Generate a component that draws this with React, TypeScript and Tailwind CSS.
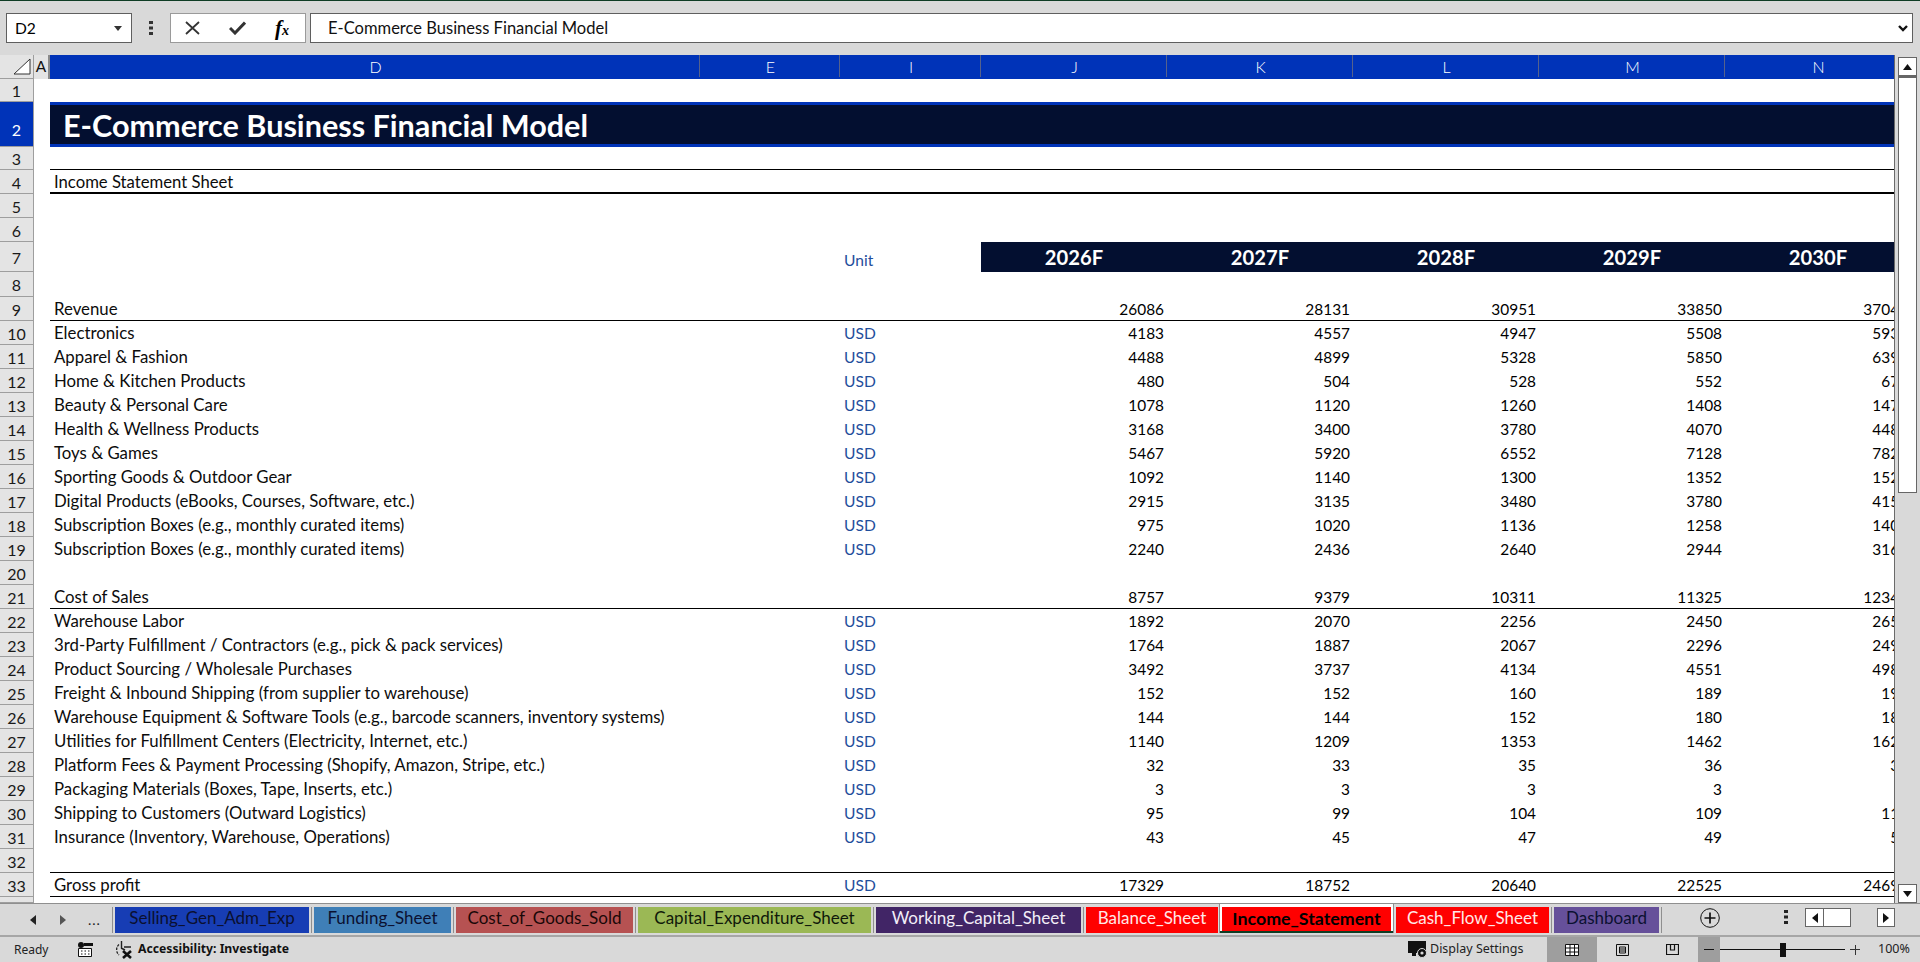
import React from "react";

type DataRow = { n: number; label?: string; unit?: boolean; values?: (number | string)[]; border?: string };

const HEAD_GRID = "grid grid-cols-[16px_650px_140px_141px_186px_186px_186px_186px_186px]";
const BODY_GRID = "grid grid-cols-[650px_140px_141px_186px_186px_186px_186px_186px]";

const rows: DataRow[] = [
  { n: 9, label: "Revenue", values: [26086, 28131, 30951, 33850, 37040], border: "border-b border-black" },
  { n: 10, label: "Electronics", unit: true, values: [4183, 4557, 4947, 5508, 5930] },
  { n: 11, label: "Apparel & Fashion", unit: true, values: [4488, 4899, 5328, 5850, 6390] },
  { n: 12, label: "Home & Kitchen Products", unit: true, values: [480, 504, 528, 552, 670] },
  { n: 13, label: "Beauty & Personal Care", unit: true, values: [1078, 1120, 1260, 1408, 1470] },
  { n: 14, label: "Health & Wellness Products", unit: true, values: [3168, 3400, 3780, 4070, 4480] },
  { n: 15, label: "Toys & Games", unit: true, values: [5467, 5920, 6552, 7128, 7820] },
  { n: 16, label: "Sporting Goods & Outdoor Gear", unit: true, values: [1092, 1140, 1300, 1352, 1520] },
  { n: 17, label: "Digital Products (eBooks, Courses, Software, etc.)", unit: true, values: [2915, 3135, 3480, 3780, 4150] },
  { n: 18, label: "Subscription Boxes (e.g., monthly curated items)", unit: true, values: [975, 1020, 1136, 1258, 1400] },
  { n: 19, label: "Subscription Boxes (e.g., monthly curated items)", unit: true, values: [2240, 2436, 2640, 2944, 3160] },
  { n: 20 },
  { n: 21, label: "Cost of Sales", values: [8757, 9379, 10311, 11325, 12340], border: "border-b border-black" },
  { n: 22, label: "Warehouse Labor", unit: true, values: [1892, 2070, 2256, 2450, 2650] },
  { n: 23, label: "3rd-Party Fulfillment / Contractors (e.g., pick & pack services)", unit: true, values: [1764, 1887, 2067, 2296, 2490] },
  { n: 24, label: "Product Sourcing / Wholesale Purchases", unit: true, values: [3492, 3737, 4134, 4551, 4980] },
  { n: 25, label: "Freight & Inbound Shipping (from supplier to warehouse)", unit: true, values: [152, 152, 160, 189, 190] },
  { n: 26, label: "Warehouse Equipment & Software Tools (e.g., barcode scanners, inventory systems)", unit: true, values: [144, 144, 152, 180, 180] },
  { n: 27, label: "Utilities for Fulfillment Centers (Electricity, Internet, etc.)", unit: true, values: [1140, 1209, 1353, 1462, 1620] },
  { n: 28, label: "Platform Fees & Payment Processing (Shopify, Amazon, Stripe, etc.)", unit: true, values: [32, 33, 35, 36, 38] },
  { n: 29, label: "Packaging Materials (Boxes, Tape, Inserts, etc.)", unit: true, values: [3, 3, 3, 3, 4] },
  { n: 30, label: "Shipping to Customers (Outward Logistics)", unit: true, values: [95, 99, 104, 109, 114] },
  { n: 31, label: "Insurance (Inventory, Warehouse, Operations)", unit: true, values: [43, 45, 47, 49, 52] },
  { n: 32, border: "border-b border-black" },
  { n: 33, label: "Gross profit", unit: true, values: [17329, 18752, 20640, 22525, 24690], border: "border-b border-black" },
];

function RowHead({ children, active, className }: { children?: React.ReactNode; active?: boolean; className?: string }) {
  return (
    <div
      className={`w-[34px] shrink-0 flex justify-center border-r border-b border-[#9e9e9e] text-[16px] leading-none ${
        active ? "bg-[#0033b8] text-white" : "bg-[#e4e4e4] text-[#1a1a1a]"
      } ${className ?? "items-center pt-[2px]"}`}
    >
      {children}
    </div>
  );
}

function DataLine({ row }: { row: DataRow }) {
  return (
    <div className="flex h-[24px] shrink-0">
      <RowHead>{row.n}</RowHead>
      <div className="w-[16px] shrink-0" />
      <div className={`${BODY_GRID} ${row.border ?? ""}`}>
        <div className="pl-1 whitespace-nowrap leading-[24px] text-[16.8px] text-[#0c0c0c]">{row.label}</div>
        <div />
        <div className="pl-1 leading-[24px] text-[15.6px] text-[#1f4e9c]">{row.unit ? "USD" : ""}</div>
        {(row.values ?? ["", "", "", "", ""]).map((v, i) => (
          <div key={i} className="pr-[3px] text-right leading-[24px] text-[15.4px] text-black">
            {v}
          </div>
        ))}
      </div>
    </div>
  );
}

function ColHead({ label }: { label: string }) {
  return (
    <div className="h-[22px] flex items-center justify-center border-r border-[#56628c] pt-[2px] pl-[2px] text-white text-[16px] font-light">{label}</div>
  );
}

function Tab({ label, width, bg, color, active }: { label: string; width: string; bg: string; color: string; active?: boolean }) {
  return (
    <div className={`${width} ${bg} ${color} h-[26px] pb-[4px] flex items-center justify-center whitespace-nowrap ${active ? "font-bold text-[17.8px]" : "text-[17px]"}`}>
      {label}
    </div>
  );
}

function Sep() {
  return <div className="w-[1px] h-[26px] mx-[2px] bg-[#8f8f8f]" />;
}

export default function App() {
  return (
    <div className="w-[1920px] h-[962px] overflow-hidden flex flex-col bg-[#d9d9d9] font-['Lato',sans-serif] border-t border-[#0f3d24]">
      {/* Formula bar */}
      <div className="h-[54px] shrink-0 flex items-start pt-[12px] pl-[6px]">
        <div className="w-[126px] h-[30px] bg-white border border-[#5f5f5f] flex items-center justify-between pl-[8px] pr-[9px] text-[15.6px] text-black">
          <span className="pt-[1px]">D2</span>
          <svg width="8" height="5" viewBox="0 0 8 5"><path d="M0 0h8L4 5z" fill="#333" /></svg>
        </div>
        <div className="w-[38px] h-[30px] flex items-center justify-center">
          <svg width="4" height="14" viewBox="0 0 4 14" fill="#333"><rect x="0" y="0" width="4" height="3" /><rect x="0" y="5.5" width="4" height="3" /><rect x="0" y="11" width="4" height="3" /></svg>
        </div>
        <div className="w-[136px] h-[30px] bg-white border border-[#9a9a9a] flex items-center text-[#333]">
          <svg className="ml-[14px]" width="15" height="14" viewBox="0 0 15 14"><path d="M1 1l13 12M14 1L1 13" stroke="#333" strokeWidth="1.8" fill="none" /></svg>
          <svg className="ml-[29px]" width="17" height="14" viewBox="0 0 17 14"><path d="M1 7l5 5L16 1.5" stroke="#333" strokeWidth="3" fill="none" /></svg>
          <span className="ml-[29px] font-['Liberation_Serif',serif] italic font-bold text-[21px] leading-none text-black">f<span className="text-[14px]">x</span></span>
        </div>
        <div className="ml-[4px] w-[1603px] h-[30px] bg-white border border-[#5f5f5f] flex items-center justify-between pl-[17px] pr-[4px] text-[16.55px] text-[#111]">
          <span className="pt-[1px]">E-Commerce Business Financial Model</span>
          <svg width="10" height="7" viewBox="0 0 10 7"><path d="M1 1l4 4 4-4" stroke="#111" strokeWidth="2.4" fill="none" /></svg>
        </div>
      </div>

      {/* Sheet + vertical scrollbar */}
      <div className="h-[848px] shrink-0 flex">
        <div className="w-[1895px] h-full overflow-hidden border-r border-[#6a6a6a] bg-white flex flex-col">
          {/* Column headers */}
          <div className="flex h-[24px] shrink-0 bg-[#d9d9d9]">
            <div className="w-[34px] shrink-0 bg-[#e4e4e4] border-r border-b border-[#9e9e9e] flex items-end justify-end pr-[2px] pb-[3px]">
              <svg width="18" height="17" viewBox="0 0 18 17"><path d="M17 1v15H1z" fill="#fff" stroke="#333" strokeWidth="1" /></svg>
            </div>
            <div className={`${HEAD_GRID} w-[1860px] bg-[#0033b8]`}>
              <div className="bg-[#e4e4e4] border-r-2 border-[#8a8a8a] h-[24px] flex items-center justify-center text-[15.4px] text-[#111]">A</div>
              {["D", "E", "I", "J", "K", "L", "M", "N"].map((c) => (
                <ColHead key={c} label={c} />
              ))}
            </div>
          </div>

          <div className="flex h-[23px] shrink-0"><RowHead>1</RowHead></div>

          {/* Title */}
          <div className="flex h-[45px] shrink-0">
            <RowHead active className="items-end pb-[8px]">2</RowHead>
            <div className="w-[16px] shrink-0" />
            <div className="flex-1 bg-[#030f30] border-y-[3px] border-[#0033b8] flex items-center pl-[13px] pt-[3px] text-white font-bold text-[30.6px] leading-none">
              E-Commerce Business Financial Model
            </div>
          </div>

          <div className="flex h-[23px] shrink-0">
            <RowHead>3</RowHead>
            <div className="w-[16px] shrink-0" />
            <div className="flex-1 border-b border-black" />
          </div>

          <div className="flex h-[24px] shrink-0">
            <RowHead>4</RowHead>
            <div className="w-[16px] shrink-0" />
            <div className="flex-1 border-b-2 border-black pl-1 leading-[24px] text-[16.7px] text-[#0c0c0c]">Income Statement Sheet</div>
          </div>

          <div className="flex h-[24px] shrink-0"><RowHead>5</RowHead></div>
          <div className="flex h-[24px] shrink-0"><RowHead>6</RowHead></div>

          {/* Years */}
          <div className="flex h-[30px] shrink-0">
            <RowHead className="items-end pb-[5px]">7</RowHead>
            <div className={`${HEAD_GRID} h-full`}>
              <div />
              <div />
              <div />
              <div className="pl-1 pt-[6px] text-[15.6px] leading-[24px] text-[#1f4e9c]">Unit</div>
              {["2026F", "2027F", "2028F", "2029F", "2030F"].map((y) => (
                <div key={y} className="bg-[#030f30] text-white font-bold text-[20.2px] flex items-center justify-center">{y}</div>
              ))}
            </div>
          </div>

          <div className="flex h-[25px] shrink-0"><RowHead>8</RowHead></div>

          {rows.map((r) => (
            <DataLine key={r.n} row={r} />
          ))}

          <div className="flex h-[6px] shrink-0"><RowHead className="items-center" /></div>
        </div>

        {/* Vertical scrollbar */}
        <div className="flex-1 pl-[3px] pr-[3px] pt-[2px] flex flex-col">
          <div className="h-[19px] bg-white border border-[#666] flex items-center justify-center">
            <svg width="9" height="6" viewBox="0 0 9 6"><path d="M0 6h9L4.5 0z" fill="#111" /></svg>
          </div>
          <div className="h-[417px] bg-white border border-[#666] border-t-2" />
          <div className="flex-1" />
          <div className="h-[19px] bg-white border border-[#666] flex items-center justify-center">
            <svg width="9" height="6" viewBox="0 0 9 6"><path d="M0 0h9L4.5 6z" fill="#111" /></svg>
          </div>
        </div>
      </div>

      {/* Sheet tabs */}
      <div className="h-[32px] shrink-0 flex items-start pt-[3px] border-t border-[#8f8f8f]">
        <div className="w-[112px] h-[26px] flex items-center text-[#222]">
          <svg className="ml-[29px]" width="7" height="10" viewBox="0 0 7 10"><path d="M7 0v10L1 5z" fill="#222" /></svg>
          <svg className="ml-[24px]" width="7" height="10" viewBox="0 0 7 10"><path d="M0 0v10l6-5z" fill="#555" /></svg>
          <span className="ml-[21px] text-[14px] leading-none tracking-[1px]">...</span>
        </div>
        <div className="w-[1px] h-[26px] bg-[#8f8f8f] mr-[2px]" />
        <Tab label="Selling_Gen_Adm_Exp" width="w-[194px]" bg="bg-[#173db4]" color="text-[#0b1030]" />
        <Sep />
        <Tab label="Funding_Sheet" width="w-[137px]" bg="bg-[#3f7fb7]" color="text-[#0b1030]" />
        <Sep />
        <Tab label="Cost_of_Goods_Sold" width="w-[177px]" bg="bg-[#b65252]" color="text-[#1a0808]" />
        <Sep />
        <Tab label="Capital_Expenditure_Sheet" width="w-[233px]" bg="bg-[#9bb855]" color="text-[#10180a]" />
        <Sep />
        <Tab label="Working_Capital_Sheet" width="w-[205px]" bg="bg-[#412566]" color="text-[#f2eef8]" />
        <Sep />
        <Tab label="Balance_Sheet" width="w-[132px]" bg="bg-[#ff0000]" color="text-[#ffe8e8]" />
        <div className="relative h-[29px] ml-[1px] mr-[2px] -mt-[3px] pt-[3px] px-[2px] border-x border-[#8f8f8f] bg-white">
          <Tab label="Income_Statement" width="w-[169px]" bg="bg-[#ff0000]" color="text-black" active />
          <div className="absolute left-0 right-0 bottom-0 h-[2px] bg-[#0f3d24]" />
        </div>
        <Tab label="Cash_Flow_Sheet" width="w-[153px]" bg="bg-[#ff0000]" color="text-[#ffe8e8]" />
        <Sep />
        <Tab label="Dashboard" width="w-[105px]" bg="bg-[#66509a]" color="text-[#0b1030]" />
        <div className="w-[1px] h-[26px] bg-[#8f8f8f] ml-[2px]" />

        <div className="w-[38px]" />
        <svg width="20" height="20" viewBox="0 0 20 20" className="mt-[1px]">
          <circle cx="10" cy="10" r="9.3" fill="none" stroke="#111" strokeWidth="1" />
          <path d="M10 4.5v11M4.5 10h11" stroke="#111" strokeWidth="1.7" />
        </svg>
        <div className="w-[64px]" />
        <svg width="4" height="14" viewBox="0 0 4 14" fill="#222" className="mt-[3px]"><rect width="4" height="3" /><rect y="5.5" width="4" height="3" /><rect y="11" width="4" height="3" /></svg>
        <div className="w-[17px]" />
        <div className="w-[46px] h-[19px] mt-[1px] bg-white border border-[#666] flex">
          <div className="w-[18px] border-r border-[#666] flex items-center justify-center">
            <svg width="7" height="10" viewBox="0 0 7 10"><path d="M7 0v10L1 5z" fill="#111" /></svg>
          </div>
        </div>
        <div className="w-[26px]" />
        <div className="w-[18px] h-[19px] mt-[1px] bg-white border border-[#666] flex items-center justify-center">
          <svg width="7" height="10" viewBox="0 0 7 10"><path d="M0 0v10l6-5z" fill="#111" /></svg>
        </div>
      </div>

      {/* Status bar */}
      <div className="flex-1 flex items-center border-t-2 border-[#a6a6a6] font-['Noto_Sans',sans-serif] text-[12px] text-[#222]">
        <span className="ml-[14px] w-[62px]">Ready</span>
        <svg width="16" height="15" viewBox="0 0 16 15" className="ml-[1px]">
          <circle cx="4" cy="3" r="3" fill="#111" />
          <path d="M7 1h9v3H7z" fill="#111" />
          <path d="M1.5 6.5h13v8h-13z" fill="#fff" stroke="#111" />
          <path d="M4 9h1.5M7.5 9H9M11 9h1.5M4 12h1.5M7.5 12H9M11 12h1.5" stroke="#111" />
        </svg>
        <svg width="20" height="18" viewBox="0 0 20 18" className="ml-[21px]">
          <path d="M5 3.5A7 7 0 0 0 5 14" fill="none" stroke="#222" strokeWidth="1.3" strokeDasharray="2.5 1.2" />
          <path d="M7.5 0v7M7 7l4 2M10 6h7" stroke="#222" strokeWidth="1.4" fill="none" />
          <path d="M9 10l8 7M17 10l-8 7" stroke="#111" strokeWidth="2.6" />
        </svg>
        <span className="ml-[4px] font-bold text-[12.2px] text-[#111] w-[1270px] whitespace-nowrap">Accessibility: Investigate</span>
        <svg width="22" height="19" viewBox="0 0 22 19">
          <path d="M0 1h18v12H8v3H4v-3H0z" fill="#111" />
          <circle cx="14" cy="13" r="4.5" fill="#111" stroke="#d9d9d9" strokeWidth="1" />
          <circle cx="14" cy="13" r="1.6" fill="#d9d9d9" />
        </svg>
        <span className="text-[12.5px] w-[117px]">Display Settings</span>
        <div className="w-[50px] h-full bg-[#9e9e9e] flex items-center justify-center">
          <svg width="14" height="12" viewBox="0 0 14 12"><path d="M.5.5h13v11H.5zM.5 4h13M.5 8h13M5 .5v11M9.5.5v11" fill="#fff" stroke="#111" /></svg>
        </div>
        <div className="w-[50px] h-full flex items-center justify-center">
          <svg width="13" height="12" viewBox="0 0 13 12"><path d="M.5.5h12v11H.5z" fill="none" stroke="#111" /><path d="M3.5 3h6v6h-6zM3.5 5h6M3.5 7h6" fill="none" stroke="#111" /></svg>
        </div>
        <div className="w-[51px] h-full flex items-center justify-center">
          <svg width="13" height="11" viewBox="0 0 13 11"><path d="M.5.5h12v10H.5zM4.5.5v5.5h4V.5" fill="none" stroke="#111" strokeWidth="1.2" /></svg>
        </div>
        <div className="w-[22px] h-full bg-[#9e9e9e] flex items-center justify-center">
          <div className="w-[10px] h-[1px] bg-[#111]" />
        </div>
        <div className="w-[125px] h-full relative flex items-center">
          <div className="w-full h-[1px] bg-[#111]" />
          <div className="absolute left-[60px] top-[6px] w-[6px] h-[14px] bg-[#111]" />
        </div>
        <div className="ml-[5px] w-[10px] h-[10px] relative">
          <div className="absolute left-0 right-0 top-[4.5px] h-[1px] bg-[#333]" />
          <div className="absolute top-0 bottom-0 left-[4.5px] w-[1px] bg-[#333]" />
        </div>
        <span className="ml-[18px] text-[12.5px]">100%</span>
      </div>
    </div>
  );
}
